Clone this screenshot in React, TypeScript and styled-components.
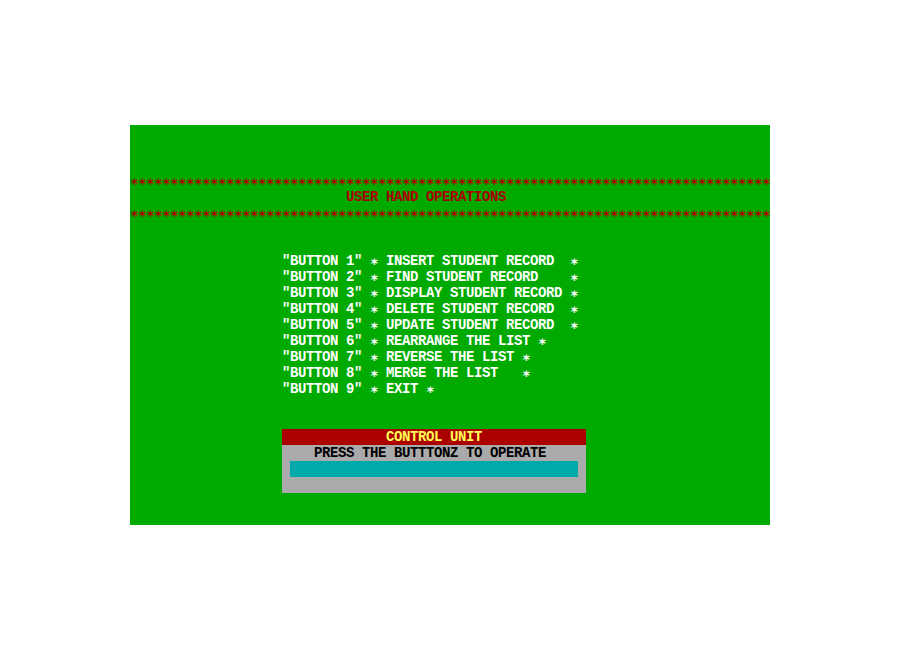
import React from "react";
import styled, { createGlobalStyle } from "styled-components";

const Global = createGlobalStyle`
  html, body { margin: 0; padding: 0; background: #ffffff; }
  #root { width: 900px; height: 650px; }
`;

const Page = styled.div`
  width: 900px;
  height: 650px;
  display: flex;
  align-items: center;
  justify-content: center;
`;

const Screen = styled.div`
  width: 640px;
  height: 400px;
  background: #00aa00;
  display: flex;
  flex-direction: column;
  font-family: "Liberation Mono", "DejaVu Sans Mono", monospace;
  font-weight: bold;
  font-size: 14px;
  letter-spacing: -0.4px;
  line-height: 16px;
`;

const Row = styled.div<{ $color?: string; $indent?: number }>`
  height: 16px;
  display: flex;
  align-items: center;
  white-space: pre;
  color: ${(p) => p.$color ?? "#ffffff"};
  padding-left: ${(p) => (p.$indent ?? 0) * 8}px;
`;

const Blank = styled.div<{ $rows: number }>`
  height: ${(p) => p.$rows * 16}px;
`;

const StarRow = styled.div`
  height: 16px;
  display: flex;
  color: #aa0000;
`;

const Star = styled.span<{ $size?: number }>`
  display: inline-block;
  flex: none;
  width: 8px;
  height: 16px;
  line-height: 16px;
  text-align: center;
  letter-spacing: 0;
  font-family: "DejaVu Sans Mono", monospace;
  font-size: ${(p) => p.$size ?? 14}px;
  font-weight: bold;
`;

const Panel = styled.div`
  margin-left: 152px;
  width: 304px;
  display: flex;
  flex-direction: column;
  background: #aaaaaa;
`;

const PanelTitle = styled.div`
  height: 16px;
  background: #aa0000;
  color: #ffff55;
  display: flex;
  align-items: center;
  white-space: pre;
  padding-left: 104px;
`;

const PanelText = styled.div`
  height: 16px;
  color: #000000;
  display: flex;
  align-items: center;
  white-space: pre;
  padding-left: 32px;
`;

const PanelInput = styled.div`
  height: 16px;
  margin: 0 8px;
  background: #00aaaa;
`;

const PanelFoot = styled.div`
  height: 16px;
`;

const Stars = () => (
  <StarRow>
    {Array.from({ length: 80 }, (_, i) => (
      <Star key={i}>∗</Star>
    ))}
  </StarRow>
);

const items: [string, string][] = [
  ["1", "INSERT STUDENT RECORD  "],
  ["2", "FIND STUDENT RECORD    "],
  ["3", "DISPLAY STUDENT RECORD "],
  ["4", "DELETE STUDENT RECORD  "],
  ["5", "UPDATE STUDENT RECORD  "],
  ["6", "REARRANGE THE LIST "],
  ["7", "REVERSE THE LIST "],
  ["8", "MERGE THE LIST   "],
  ["9", "EXIT "],
];

export default function App() {
  return (
    <>
      <Global />
      <Page>
        <Screen>
          <Blank $rows={3} />
          <Stars />
          <Row $color="#aa0000" $indent={27}>USER HAND OPERATIONS</Row>
          <Stars />
          <Blank $rows={2} />
          {items.map(([n, label]) => (
            <Row key={n} $indent={19}>
              {`"BUTTON ${n}" `}
              <Star>∗</Star>
              {` ${label}`}
              <Star>∗</Star>
            </Row>
          ))}
          <Blank $rows={2} />
          <Panel>
            <PanelTitle>CONTROL UNIT</PanelTitle>
            <PanelText>PRESS THE BUTTTONZ TO OPERATE</PanelText>
            <PanelInput />
            <PanelFoot />
          </Panel>
        </Screen>
      </Page>
    </>
  );
}
